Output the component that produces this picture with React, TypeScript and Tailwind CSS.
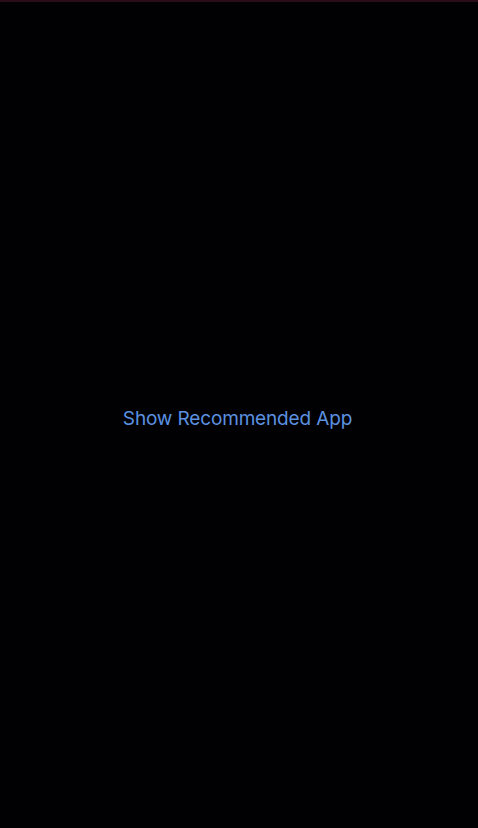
export default function App() {
  return (
    <div className="w-[478px] h-[828px] bg-[#010103] flex flex-col">
      <div className="h-[2px] bg-[#2a0d18]" />
      <div className="flex-1 flex items-center justify-center pt-[8px] pr-[3px]">
        <span
          className="text-[19px] text-[#5b91e0] tracking-[-0.15px]"
          style={{ fontFamily: 'Inter, "Liberation Sans", sans-serif' }}
        >
          Show Recommended App
        </span>
      </div>
    </div>
  );
}
